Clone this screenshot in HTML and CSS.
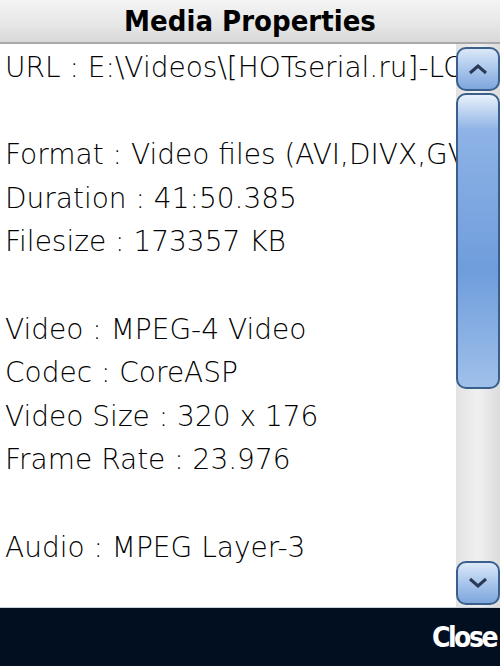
FILE: index.html
```html
<!DOCTYPE html>
<html lang="en">
<head>
  <meta charset="UTF-8" />
  <meta name="viewport" content="width=device-width, initial-scale=1.0"/>
  <title>Media Properties</title>
  <link rel="stylesheet" href="styles.css">
</head>
<body>

  <div class="screen">
    <div class="title-bar">Media Properties</div>

    <div class="main">
      <div class="props">
        <div class="line">URL : E:\Videos\[HOTserial.ru]-LO</div>
        <div class="line">&nbsp;</div>
        <div class="line">Format : Video files (AVI,DIVX,GVI</div>
        <div class="line">Duration : 41:50.385</div>
        <div class="line">Filesize : 173357 KB</div>
        <div class="line">&nbsp;</div>
        <div class="line">Video : MPEG-4 Video</div>
        <div class="line">Codec : CoreASP</div>
        <div class="line">Video Size : 320 x 176</div>
        <div class="line">Frame Rate : 23.976</div>
        <div class="line">&nbsp;</div>
        <div class="line">Audio : MPEG Layer-3</div>
      </div>

      <div class="scrollbar">
        <div class="sb-btn">
          <svg width="22" height="14" viewBox="0 0 22 14"><path d="M3 11 L11 4 L19 11" fill="none" stroke="#2a3a55" stroke-width="3"/></svg>
        </div>
        <div class="sb-thumb"></div>
        <div class="sb-track"></div>
        <div class="sb-btn">
          <svg width="22" height="14" viewBox="0 0 22 14"><path d="M3 3 L11 10 L19 3" fill="none" stroke="#2a3a55" stroke-width="3"/></svg>
        </div>
      </div>
    </div>

    <div class="softkeys">
      <span class="softkey">Close</span>
    </div>
  </div>

</body>
</html>
```

FILE: styles.css
```css
body {
  margin: 0;
  font-family: "DejaVu Sans", sans-serif;
  background: #fff;
}
.screen {
  width: 500px;
  height: 666px;
  display: flex;
  flex-direction: column;
  overflow: hidden;
}
.title-bar {
  height: 44px;
  flex: none;
  display: flex;
  align-items: center;
  justify-content: center;
  font-family: "DejaVu Sans Condensed", sans-serif;
  font-weight: bold;
  font-size: 29px;
  color: #000;
  background: linear-gradient(#f4f4f4, #e6e6e6 60%, #d8d8d8);
  border-bottom: 2px solid #a9a9a9;
  box-sizing: border-box;
}
.main {
  flex: 1;
  display: flex;
  min-height: 0;
  background: #fff;
}
.props {
  flex: 1;
  overflow: hidden;
  padding: 2px 0 0 5px;
  font-size: 28px;
  font-weight: 300;
  line-height: 43.6px;
  color: #000;
}
.line {
  white-space: nowrap;
}
.scrollbar {
  width: 44px;
  flex: none;
  display: flex;
  flex-direction: column;
  padding: 3px 0 2px;
  box-sizing: border-box;
  background: linear-gradient(90deg, #e2e2e2, #f0f0f0 50%, #dcdcdc);
}
.sb-btn {
  height: 44px;
  flex: none;
  display: flex;
  align-items: center;
  justify-content: center;
  border: 2px solid #3a5f8c;
  border-radius: 10px;
  box-sizing: border-box;
  background: linear-gradient(#dbe8f8, #a9c6ec 50%, #7ea6dc);
}
.sb-thumb {
  height: 296px;
  flex: none;
  margin-top: 2px;
  border: 2px solid #3a5f8c;
  border-radius: 10px;
  box-sizing: border-box;
  background: linear-gradient(#e8f0fb, #8eb3e6 12%, #6f9ddc 60%, #9fc0ea);
}
.sb-track {
  flex: 1;
}
.softkeys {
  height: 58px;
  flex: none;
  display: flex;
  align-items: center;
  justify-content: flex-end;
  padding-right: 4px;
  background: #020f20;
  border-top: 1px solid #c9d1dc;
}
.softkey {
  color: #fff;
  font-weight: bold;
  font-size: 28px;
  letter-spacing: -2.5px;
  font-family: "DejaVu Sans Condensed", sans-serif;
}
```
